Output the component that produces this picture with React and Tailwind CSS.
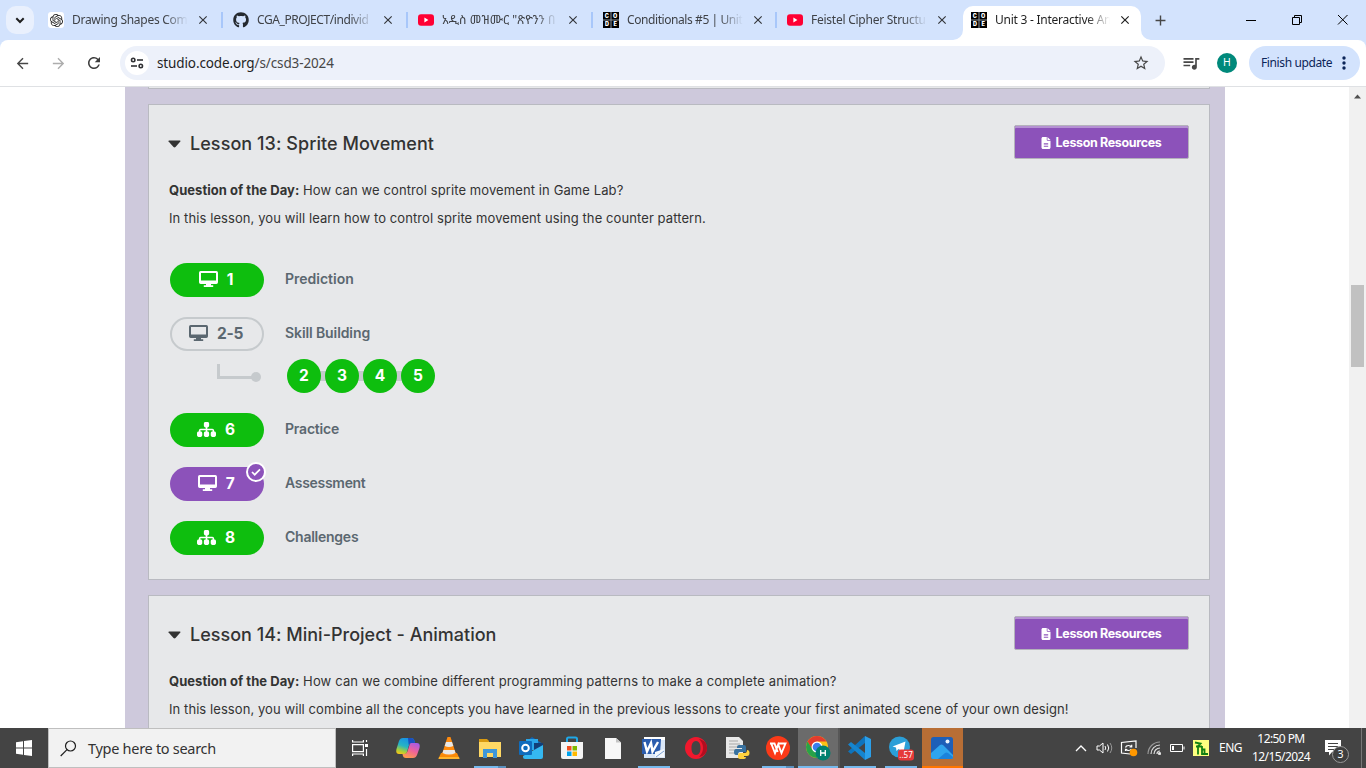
import React from "react";
import { FaGithub } from "react-icons/fa";
import { FaSitemap, FaFileLines } from "react-icons/fa6";
import { SiOpenai } from "react-icons/si";
import { MdArrowBack, MdArrowForward, MdRefresh, MdStarBorder, MdQueueMusic, MdClose, MdAdd } from "react-icons/md";

const OpenAiIcon = () => (
  <span className="flex size-4 shrink-0 items-center justify-center rounded-[3px] bg-white text-[#222]">
    <SiOpenai size={13} />
  </span>
);

const YouTubeIcon = () => (
  <svg className="size-4 shrink-0" viewBox="0 0 16 16">
    <rect y="2.3" width="16" height="11.4" rx="3" fill="#ff0033" />
    <path d="M6.4 5.6v4.8l4-2.4z" fill="#fff" />
  </svg>
);

const CodeIcon = () => (
  <svg className="size-4 shrink-0" viewBox="0 0 16 16">
    <rect width="16" height="16" fill="#8d949c" />
    <path d="M0 0h7.500v7.500H0zM8.500 0H16v7.500H8.500zM0 8.500h7.500V16H0zM8.500 8.500H16V16H8.500z" fill="#000" />
    <g fill="#fff" fontFamily="Inter, sans-serif" fontSize="5.5" fontWeight="900" textAnchor="middle">
      <text x="3.900" y="5.800">C</text>
      <text x="12.200" y="5.800">O</text>
      <text x="3.900" y="14.200">D</text>
      <text x="12.200" y="14.200">E</text>
    </g>
  </svg>
);

const Desktop = () => (
  <svg width="19" height="16" viewBox="0 0 19 16" fill="currentColor" className="mb-px">
    <path fillRule="evenodd" d="M1.700 0h15.600Q19 0 19 1.700v9.600Q19 13 17.300 13H12v1.300h2.200V16H4.800v-1.700H7V13H1.700Q0 13 0 11.300V1.700Q0 0 1.700 0zM2 2v7.500h15V2z" />
  </svg>
);

const Sitemap = () => <FaSitemap size={19} className="mb-px" />;

const tabs = [
  { icon: <OpenAiIcon />, title: "Drawing Shapes Com", w: "w-[185px]", tr: "tracking-[-0.28px]" },
  { icon: <FaGithub size={16} className="shrink-0 text-[#24292f]" />, title: "CGA_PROJECT/individ", w: "w-[185px]", tr: "tracking-[-0.42px]" },
  { icon: <YouTubeIcon />, title: "አዲስ መዝሙር \"ጽዮንን በ", w: "w-[185px]", tr: "tracking-[0.1px]" },
  { icon: <CodeIcon />, title: "Conditionals #5 | Unit", w: "w-[184px]", tr: "tracking-[-0.42px]" },
  { icon: <YouTubeIcon />, title: "Feistel Cipher Structu", w: "w-[185px]", tr: "tracking-[-0.25px]", last: true },
];

const fade = "[mask-image:linear-gradient(to_right,#000_80%,transparent)]";

function Tab({ icon, title, w, tr, last }) {
  return (
    <div className={`flex h-full shrink-0 items-center pl-[10px] ${w}`}>
      {icon}
      <span className={`ml-2 w-[116px] overflow-hidden text-[12px] leading-5 whitespace-nowrap text-[#3f4247] ${tr} ${fade}`}>{title}</span>
      <MdClose size={14} className="ml-[8px] shrink-0 text-[#33363b]" />
      <span className={`ml-auto h-4 w-[2px] ${last ? "" : "bg-[#a8c7fa]"}`} />
    </div>
  );
}

function TabStrip() {
  return (
    <div className="flex h-10 items-center bg-[#d3e3fd]">
      <button className="ml-[6px] flex size-7 items-center justify-center rounded-[10px] bg-[#e9f0fd]">
        <svg width="10" height="7" viewBox="0 0 10 7"><path d="M1.3 1.3L5 5l3.700-3.700" stroke="#1f1f1f" strokeWidth="2" fill="none" /></svg>
      </button>
      <div className="ml-1 flex h-full">
        {tabs.map((t) => <Tab key={t.title} {...t} />)}
      </div>
      <div className="relative ml-px flex h-[34px] w-[178px] shrink-0 items-center self-end rounded-t-[10px] bg-white pb-[6px] pl-2">
        <svg className="absolute bottom-0 -left-[10px]" width="10" height="10"><path d="M10 0v10H0A10 10 0 0 0 10 0z" fill="#fff" /></svg>
        <svg className="absolute -right-[10px] bottom-0" width="10" height="10"><path d="M0 0v10h10A10 10 0 0 1 0 0z" fill="#fff" /></svg>
        <CodeIcon />
        <span className={`ml-2 w-[115px] overflow-hidden text-[12px] leading-5 tracking-[-0.25px] whitespace-nowrap text-[#1f1f1f] ${fade}`}>Unit 3 - Interactive An</span>
        <MdClose size={14} className="ml-[8px] shrink-0 text-[#1f1f1f]" />
      </div>
      <MdAdd size={17} className="ml-[11px] text-[#474747]" />
      <svg className="ml-auto" width="106" height="14" viewBox="0 0 106 14" stroke="#000" fill="none">
        <path d="M1 7.500h10M47.500 4.500h7v7h-7zM49.500 4.500v-2h7v7h-2M93 2l9.500 9.500M102.500 2l-9.500 9.500" />
      </svg>
      <span className="w-[15px]" />
    </div>
  );
}

function Toolbar() {
  return (
    <div className="bg-[#d3e3fd]">
      <div className="flex h-[47px] items-center rounded-t-[8px] border-b border-[#dfe1e4] bg-white">
        <MdArrowBack size={17} className="ml-[14px] text-[#474747]" />
        <MdArrowForward size={17} className="ml-[19px] text-[#adadad]" />
        <MdRefresh size={18} className="ml-[18px] text-[#3c3c3c]" />
        <div className="ml-[17px] flex h-[34px] w-[1045px] items-center rounded-full bg-[#edf1fa] pl-[5px]">
          <span className="flex size-6 items-center justify-center rounded-full bg-white">
            <svg width="14" height="14" viewBox="0 0 14 14" fill="none" stroke="#303134" strokeWidth="1.600">
              <circle cx="3.200" cy="4" r="1.700" /><path d="M7 4h6" /><circle cx="10.800" cy="10" r="1.700" /><path d="M1 10h6" />
            </svg>
          </span>
          <span className="ml-2 text-[13.500px] leading-5 tracking-[-0.12px] text-[#1f1f1f]">studio.code.org<span className="text-[#474747]">/s/csd3-2024</span></span>
          <MdStarBorder size={18} className="mr-[15px] ml-auto text-[#474747]" />
        </div>
        <MdQueueMusic size={20} className="ml-[16px] text-[#474747]" />
        <span className="ml-[16px] flex size-5 items-center justify-center rounded-full bg-[#00897b] text-[10.500px] text-white">H</span>
        <button className="ml-3 flex h-[34px] w-[111px] items-center rounded-full bg-[#d3e3fd] pl-3 text-[12px] tracking-[-0.38px] whitespace-nowrap text-[#0b2559]">
          Finish update
          <svg className="mr-[14px] ml-auto" width="4" height="14" fill="#0b2559"><circle cx="2" cy="2" r="1.700" /><circle cx="2" cy="7" r="1.700" /><circle cx="2" cy="12" r="1.700" /></svg>
        </button>
      </div>
    </div>
  );
}

function LessonCard({ title, question, text, titleTr, qTr, tTr, children, className = "" }) {
  return (
    <section className={`shrink-0 border border-[#b9bac1] bg-[#e7e8ea] px-5 pt-5 ${className}`}>
      <header className="flex h-[34px] items-center justify-between">
        <h2 className={`flex items-center pt-1 text-[18px] leading-6 font-medium text-[#333] ${titleTr}`}>
          <svg className="mr-[9px] -ml-px" width="13" height="8"><path d="M1 0.500h11q1 .3.300 1.100L7.500 7q-1 .8-2 0L.600 1.600Q0 .8 1 .5z" fill="#333" /></svg>
          {title}
        </h2>
        <button className="flex h-[34px] w-[175px] items-center justify-center rounded-[2px] border border-[#b4b2bb] bg-[#8c52ba] pt-[2px] pr-[2px] text-[12.500px] font-bold tracking-[-0.35px] whitespace-nowrap text-white shadow-[inset_0_2px_0_#b591d3]">
          <FaFileLines size={12} className="mr-1" />Lesson Resources
        </button>
      </header>
      <div className="mt-[17px] text-[13px] leading-7 whitespace-nowrap text-[#333]">
        <p className={qTr}><b className="font-bold tracking-[0.04px]">Question of the Day:</b> {question}</p>
        <p className={tTr}>{text}</p>
      </div>
      {children}
    </section>
  );
}

const pillTones = {
  green: "bg-[#0ebe0e] text-white",
  purple: "bg-[#8c52ba] text-white",
  outline: "border-2 border-[#c6cacd] text-[#5b6770]",
};

function Level({ tone, Icon, num, label, tr, checked }) {
  return (
    <div className="flex h-[34px] items-center">
      <div className={`relative flex h-[34px] w-[94px] items-center justify-center gap-[9px] rounded-full pr-[2px] pb-px text-[15.500px] font-bold ${pillTones[tone]}`}>
        <Icon />
        <span className="tracking-[-0.3px]">{num}</span>
        {checked && (
          <span className="absolute -top-[5px] -right-[2px] flex size-5 items-center justify-center rounded-full border-2 border-white bg-[#8c52ba]">
            <svg width="10" height="8" viewBox="0 0 10 8"><path d="M1 4l2.700 2.700L9 1.300" fill="none" stroke="#fff" strokeWidth="1.700" /></svg>
          </span>
        )}
      </div>
      <span className={`ml-[21px] pb-[3px] text-[14px] font-semibold text-[#5b6770] ${tr}`}>{label}</span>
    </div>
  );
}

function Bubbles() {
  return (
    <div className="mt-2 mb-5 flex h-[34px] items-center pl-[47px]">
      <svg width="45" height="34" fill="#c6cacd"><path d="M0 5h3v12h33v3H0z" /><circle cx="39" cy="18" r="5" /></svg>
      <div className="ml-[25px] flex items-center">
        {[2, 3, 4, 5].map((n) => (
          <React.Fragment key={n}>
            {n > 2 && <span className="-mx-[3px] h-[10px] w-[10px] bg-[#c6cacd]" />}
            <span className="z-10 flex size-[34px] items-center justify-center rounded-full bg-[#0ebe0e] text-[15.500px] font-bold text-white">{n}</span>
          </React.Fragment>
        ))}
      </div>
    </div>
  );
}

function Page() {
  return (
    <main className="flex h-[641px] overflow-hidden bg-white pl-[125px] font-['Inter',sans-serif]">
      <div className="flex w-[1100px] flex-col bg-[#cec9dc] pr-[15px] pl-[23px]">
        <div className="h-[2px] w-[1062px] shrink-0 border-x border-b border-[#b9bac1] bg-[#e7e8ea]" />
        <LessonCard
          className="mt-[15px] h-[476px] w-[1062px]"
          title="Lesson 13: Sprite Movement"
          titleTr="tracking-[0.06px]"
          question="How can we control sprite movement in Game Lab?"
          text="In this lesson, you will learn how to control sprite movement using the counter pattern."
          qTr="tracking-[0.1px]"
          tTr="tracking-[0.09px]"
        >
          <div className="mt-[31px] ml-px flex flex-col">
            <Level tone="green" Icon={Desktop} num="1" label="Prediction" tr="tracking-[0px]" />
            <div className="h-5" />
            <Level tone="outline" Icon={Desktop} num="2-5" label="Skill Building" tr="tracking-[-0.1px]" />
            <Bubbles />
            <div className="flex flex-col gap-5">
              <Level tone="green" Icon={Sitemap} num="6" label="Practice" tr="tracking-[-0.2px]" />
              <Level tone="purple" Icon={Desktop} num="7" label="Assessment" tr="tracking-[-0.3px]" checked />
              <Level tone="green" Icon={Sitemap} num="8" label="Challenges" tr="tracking-[-0.25px]" />
            </div>
          </div>
        </LessonCard>
        <LessonCard
          className="mt-[15px] h-[300px] w-[1062px]"
          title="Lesson 14: Mini-Project - Animation"
          titleTr="tracking-[0.01px]"
          question="How can we combine different programming patterns to make a complete animation?"
          text="In this lesson, you will combine all the concepts you have learned in the previous lessons to create your first animated scene of your own design!"
          qTr="tracking-[0.15px]"
          tTr="tracking-[0.075px]"
        />
      </div>
      <div className="ml-auto flex w-[17px] flex-col items-center bg-[#f1f1f1]">
        <svg className="mt-[7px]" width="7" height="5"><path d="M0 4.500L3.500 0.500 7 4.500z" fill="#505050" /></svg>
        <div className="mt-[186px] h-[82px] w-[13px] bg-[#c1c1c1]" />
      </div>
    </main>
  );
}

const S = ({ children }) => <svg width="26" height="26" viewBox="0 0 26 26">{children}</svg>;

const apps = [
  { id: "copilot", icon: (
    <S>
      <defs>
        <linearGradient id="cp1" x1="0.600" y1="0" x2="0.200" y2="1"><stop stopColor="#168fe8" /><stop offset=".5" stopColor="#27b4c4" /><stop offset=".8" stopColor="#a5cf3b" /><stop offset="1" stopColor="#f6c518" /></linearGradient>
        <linearGradient id="cp2" x1="0.800" y1="0" x2="0.300" y2="1"><stop stopColor="#a45be8" /><stop offset=".5" stopColor="#f0629a" /><stop offset="1" stopColor="#ff9c4b" /></linearGradient>
      </defs>
      <path d="M8 3h8c2 0 3 1 3.500 3l.500 2h-3c-2 0-2.800 1-3.300 3l-1.700 6c-.7 2-1.500 2-3 2H4c-3 0-3-3-2.500-5L4 6c.8-2 2-3 4-3z" fill="url(#cp1)" />
      <path d="M13 3h3c2 0 3 1 3.500 3l.500 2h-3c-2 0-2.800 1-3.300 2z" fill="#1a4fc0" />
      <path d="M18 23h-7c-2 0-3-1-3.500-4H9c2 0 3-1 3.600-3l1.900-6c.6-2 1.500-2 3-2H22c3 0 3 3 2.500 5L22 20c-.8 2-2 3-4 3z" fill="url(#cp2)" />
    </S>) },
  { id: "vlc", icon: (
    <S>
      <path d="M5 18h16l2.500 5.500h-21z" fill="#f78a08" /><path d="M3 22h20l.500 2h-21z" fill="#ffb52e" />
      <path d="M11.500 2h3L20 19q-7 4-14 0z" fill="#ff8b0f" />
      <path d="M10 7h6l1.300 4q-4.300 2-8.600 0zM7.400 15h11.200l.9 3q-6.500 3-13 0z" fill="#e8e8e8" />
    </S>) },
  { id: "explorer", line: "split", icon: (
    <S><path d="M2 4h8l2 2v4H2z" fill="#d99a10" /><path d="M2 7h22v15H2z" fill="#ffd864" /><path d="M6 14h14v9h-4v-5h-6v5H6z" fill="#3f97d8" /></S>) },
  { id: "outlook", icon: (
    <S><path d="M5 9L14 2l11 7v5H5z" fill="#1066b5" /><path d="M8 4h12v11H8z" fill="#2aa7ea" /><path d="M16 8h9v8h-9z" fill="#123f79" /><path d="M5 21l20-11v12q0 2-2 2H7q-2 0-2-2z" fill="#35b8f1" /><rect x="1" y="6" width="13" height="14" rx="1" fill="#0f6cbd" /><circle cx="7.500" cy="13" r="3.300" fill="none" stroke="#fff" strokeWidth="2" /></S>) },
  { id: "store", icon: (
    <S><path d="M8 8V4q0-1.500 1.500-1.500h7Q18 2.500 18 4v4" fill="none" stroke="#1fa8e8" strokeWidth="2" /><path d="M2 7h22v15q0 2-2 2H4q-2 0-2-2z" fill="#f5f5f5" /><path d="M8 11h4.500v4.500H8z" fill="#f25022" /><path d="M13.500 11H18v4.500h-4.500z" fill="#7fba00" /><path d="M8 16.500h4.500V21H8z" fill="#00a4ef" /><path d="M13.500 16.500H18V21h-4.500z" fill="#ffb900" /></S>) },
  { id: "file", icon: (
    <S><path d="M5 3h11l5 4.500V24H5z" fill="#f7f7f7" /><path d="M16 3l5 4.500h-5z" fill="#c5c5c5" /></S>) },
  { id: "word", line: "full", icon: (
    <S><path d="M3 2h21v21H3z" fill="#dbe7f7" /><path d="M3 2h21v3H3z" fill="#fff" /><path d="M1 4h19l-1 15H1z" fill="#2a5cae" /><path d="M3.500 7l2.500 9.500L10 8l1.500 8.500L17 7" fill="none" stroke="#fff" strokeWidth="2.400" /><path d="M14 17l9-3v8h-9z" fill="#f4f8fd" /><path d="M15 22l8-6" stroke="#7aa0d6" /></S>) },
  { id: "opera", icon: (
    <S><path fillRule="evenodd" d="M13 2c6 0 11 5 11 11s-5 11-11 11S2 19 2 13 7 2 13 2zm0 4c-3 0-4.500 3-4.500 7s1.500 7 4.500 7 4.500-3 4.500-7S16 6 13 6z" fill="#f0182d" /><path d="M16 4c5 1 8 4 8 9s-3 8-8 9c3-3 4-6 4-9s-1-6-4-9z" fill="#b20e20" /></S>) },
  { id: "python", icon: (
    <S><path d="M2 2h13l4 4v17H2z" fill="#e8e8e8" /><path d="M5 6h9M5 9h11M5 12h9M5 15h7M5 18h6" stroke="#a8a8a8" /><path d="M15 10h5q2 0 2 2v5h-6q-2 0-2 3h-2q-2 0-2-3t2-3h6v-1h-5v-1q0-2 2-2z" fill="#38719f" /><path d="M20 24h-4q-2 0-2-2v-2q0-2 2-2h5q2 0 2-3 2.500 0 2.500 3t-2.500 3h-3v1h2q0 2-2 2z" fill="#ffd23e" /></S>) },
  { id: "wps", line: "split", icon: (
    <S><circle cx="13" cy="13" r="12" fill="#fb3a18" /><path d="M5 8.500h4.500l3.200 8.500M6.200 8.500L10 18l3.200-8.500L16.500 18l4-9.500H13" fill="none" stroke="#fff" strokeWidth="1.900" /></S>) },
  { id: "chrome", line: "wide", cell: "bg-[#6b6b6b]", icon: (
    <S><circle cx="12" cy="12" r="11" fill="#fbc116" /><path d="M2.500 6.500A11 11 0 0 1 21.500 6.500H12l-5 8z" fill="#e33b2e" /><path d="M2.500 6.500A11 11 0 0 0 12 23l4.500-8.500h-9z" fill="#28a249" /><circle cx="12" cy="12" r="5.500" fill="#fff" /><circle cx="12" cy="12" r="4.300" fill="#3b7ded" /><circle cx="18" cy="18" r="7.500" fill="#00806f" /><path d="M15.700 15v6M20.300 15v6M15.700 18h4.600" stroke="#fff" strokeWidth="1.300" /></S>) },
  { id: "vscode", line: "full", icon: (
    <S><path d="M18 1l6 3v18l-6 3z" fill="#2b9fe9" /><path d="M18 1v7L4 19l-3-2.500z" fill="#0e74bd" /><path d="M18 25v-7L4 7 1 9.500z" fill="#1585cf" /></S>) },
  { id: "telegram", line: "full", icon: (
    <S><circle cx="11.500" cy="12" r="10.500" fill="#2b9fd8" /><path d="M4.500 11.500L17.500 6.500 15.500 17l-5-3-2 2-.5-3.500z" fill="#fff" /><rect x="10" y="14.500" width="16" height="11" rx="3" fill="#e5393a" /><text x="18" y="23" textAnchor="middle" fontSize="8" fill="#fff" fontFamily="Noto Sans, sans-serif">..57</text></S>) },
  { id: "photos", line: "orange", cell: "bg-[#b86e35]", icon: (
    <S><rect x="2" y="2" width="22" height="22" rx="2.500" fill="#1d5fb8" /><path d="M2 18L11 10q1.500-1 3 0l10 10v2q0 2-2 2H4q-2 0-2-2z" fill="#2fa5ee" /><path d="M9 24l7-6q1.500-1 3 0l5 4q0 2-2 2z" fill="#1b83dc" /><circle cx="18.500" cy="6.500" r="2" fill="#e9f3fd" /></S>) },
];

const lines = {
  split: "w-8 bg-[linear-gradient(to_right,#76b9ed_74%,#5a90bd_74%)]",
  full: "w-8 bg-[#76b9ed]",
  wide: "w-full bg-[#76b9ed]",
  orange: "w-full bg-[#ff7500]",
};

function Taskbar() {
  return (
    <footer className="flex h-10 items-stretch bg-[#444]">
      <div className="flex w-12 items-center justify-center">
        <svg width="16" height="16" viewBox="0 0 16 16" fill="#fff"><path d="M0 2.200L7 1.200v6.300H0zM8 1.100L16 0v7.500H8zM0 8.500h7v6.300L0 13.800zM8 8.500h8V16l-8-1.100z" /></svg>
      </div>
      <div className="flex w-[288px] items-center border border-[#bfbfbf] bg-[#f2f2f2] pl-[11px]">
        <svg width="17" height="17" viewBox="0 0 17 17" fill="none" stroke="#1f1f1f" strokeWidth="1.200"><circle cx="10.500" cy="6" r="5" /><path d="M7 9.700L.7 16" /></svg>
        <span className="ml-[11px] pt-px text-[14.500px] tracking-[-0.29px] text-[#333]">Type here to search</span>
      </div>
      <div className="ml-[3.500px] flex w-[41px] items-center justify-center">
        <svg width="17" height="16" viewBox="0 0 17 16" fill="none" stroke="#fff" strokeWidth="1.200"><path d="M.6 4.600h10.800v7H.6zM.6 0v2h10.800V0M.6 16v-2h10.800v2M14.500 0v2M14.500 9v7" /><path d="M13 4h3v3h-3z" fill="#fff" stroke="none" /></svg>
      </div>
      <div className="ml-[6.500px] flex">
        {apps.map((a) => (
          <div key={a.id} className={`flex w-[41.150px] flex-col items-center justify-between ${a.cell ? `${a.cell} ${a.id === "chrome" ? "border-r-2 border-[#575757]" : ""}` : ""}`}>
            <span className="mt-[7px] flex">{a.icon}</span>
            <span className={`h-[2px] ${a.line ? lines[a.line] : ""}`} />
          </div>
        ))}
      </div>
      <div className="ml-auto flex items-center text-white">
        <svg width="12" height="8" fill="none" stroke="#fff" strokeWidth="1.300"><path d="M1 7l5-5 5 5" /></svg>
        <svg className="ml-[9px]" width="18" height="14" viewBox="0 0 18 14" fill="none" stroke="#fff"><path d="M1 5h2.500L7 2v10L3.500 9H1zM9 5q1.500 2 0 4M11.500 3.500q2.500 3.500 0 7" /><path d="M14 2q3.500 5 0 10" stroke="#999" /></svg>
        <svg className="ml-[6px]" width="18" height="18" viewBox="0 0 18 18" fill="none" stroke="#fff" strokeWidth="1.200"><path d="M16 9V2L1.500 3.500V14L10 15M5.500 8.500q.5-2 3-2t3 1.500M11.700 5.700V8H9.500M11.500 10q-1 1.500-3 1.500T6 10M5.500 12V9.800" /><circle cx="13.500" cy="13.500" r="3.800" fill="#ff9800" stroke="none" /></svg>
        <svg className="ml-[9px]" width="14" height="14" viewBox="0 0 14 14" fill="none" stroke="#ddd" strokeWidth="1.200"><path d="M1 13A12 12 0 0 1 13 1" stroke="#999" /><path d="M4 13a9 9 0 0 1 9-9M7 13a6 6 0 0 1 6-6M10 13a3 3 0 0 1 3-3" /><circle cx="12.500" cy="12.500" r="1" fill="#fff" /></svg>
        <svg className="ml-[9px]" width="15" height="10" fill="none" stroke="#fff"><path d="M.5 1.500h12v7H.5zM14 3.500v3" /><path d="M2 3h2v4H2z" fill="#fff" stroke="none" /></svg>
        <svg className="ml-[8px]" width="16" height="16"><rect width="16" height="16" fill="#ffff80" /><path d="M2 2.500l5.500 1-2.500 2.500M3 6.500h6M5 6.500v8M9 6v8h6M9 9.500h2.500V14" fill="none" stroke="#128012" strokeWidth="1.800" /></svg>
        <span className="ml-[10px] w-6 text-[12px] tracking-[-0.5px]">ENG</span>
        <div className="ml-[9px] w-[58px] text-center text-[12px] leading-[18px] tracking-[-0.58px] whitespace-nowrap">
          <div>12:50 PM</div>
          <div>12/15/2024</div>
        </div>
        <div className="relative ml-[15px] h-5 w-4">
          <svg className="mt-px" width="16" height="17"><path d="M0 1h16v12h-9l-3 3.500V13H0z" fill="#fff" /><path d="M3 4.500h10M3 7.500h10M3 10.500h6" stroke="#444" /></svg>
          <span className="absolute top-[8px] left-[7px] flex size-[17px] items-center justify-center rounded-full border border-[#999] bg-[#3f3f3f] text-[10.500px]">3</span>
        </div>
        <span className="ml-5 h-10 w-px bg-[#777]" />
        <span className="w-1" />
      </div>
    </footer>
  );
}

export default function App() {
  return (
    <div className="h-[768px] w-[1366px] overflow-hidden font-['Noto_Sans','Noto_Sans_Ethiopic',sans-serif]">
      <TabStrip />
      <Toolbar />
      <Page />
      <Taskbar />
    </div>
  );
}
